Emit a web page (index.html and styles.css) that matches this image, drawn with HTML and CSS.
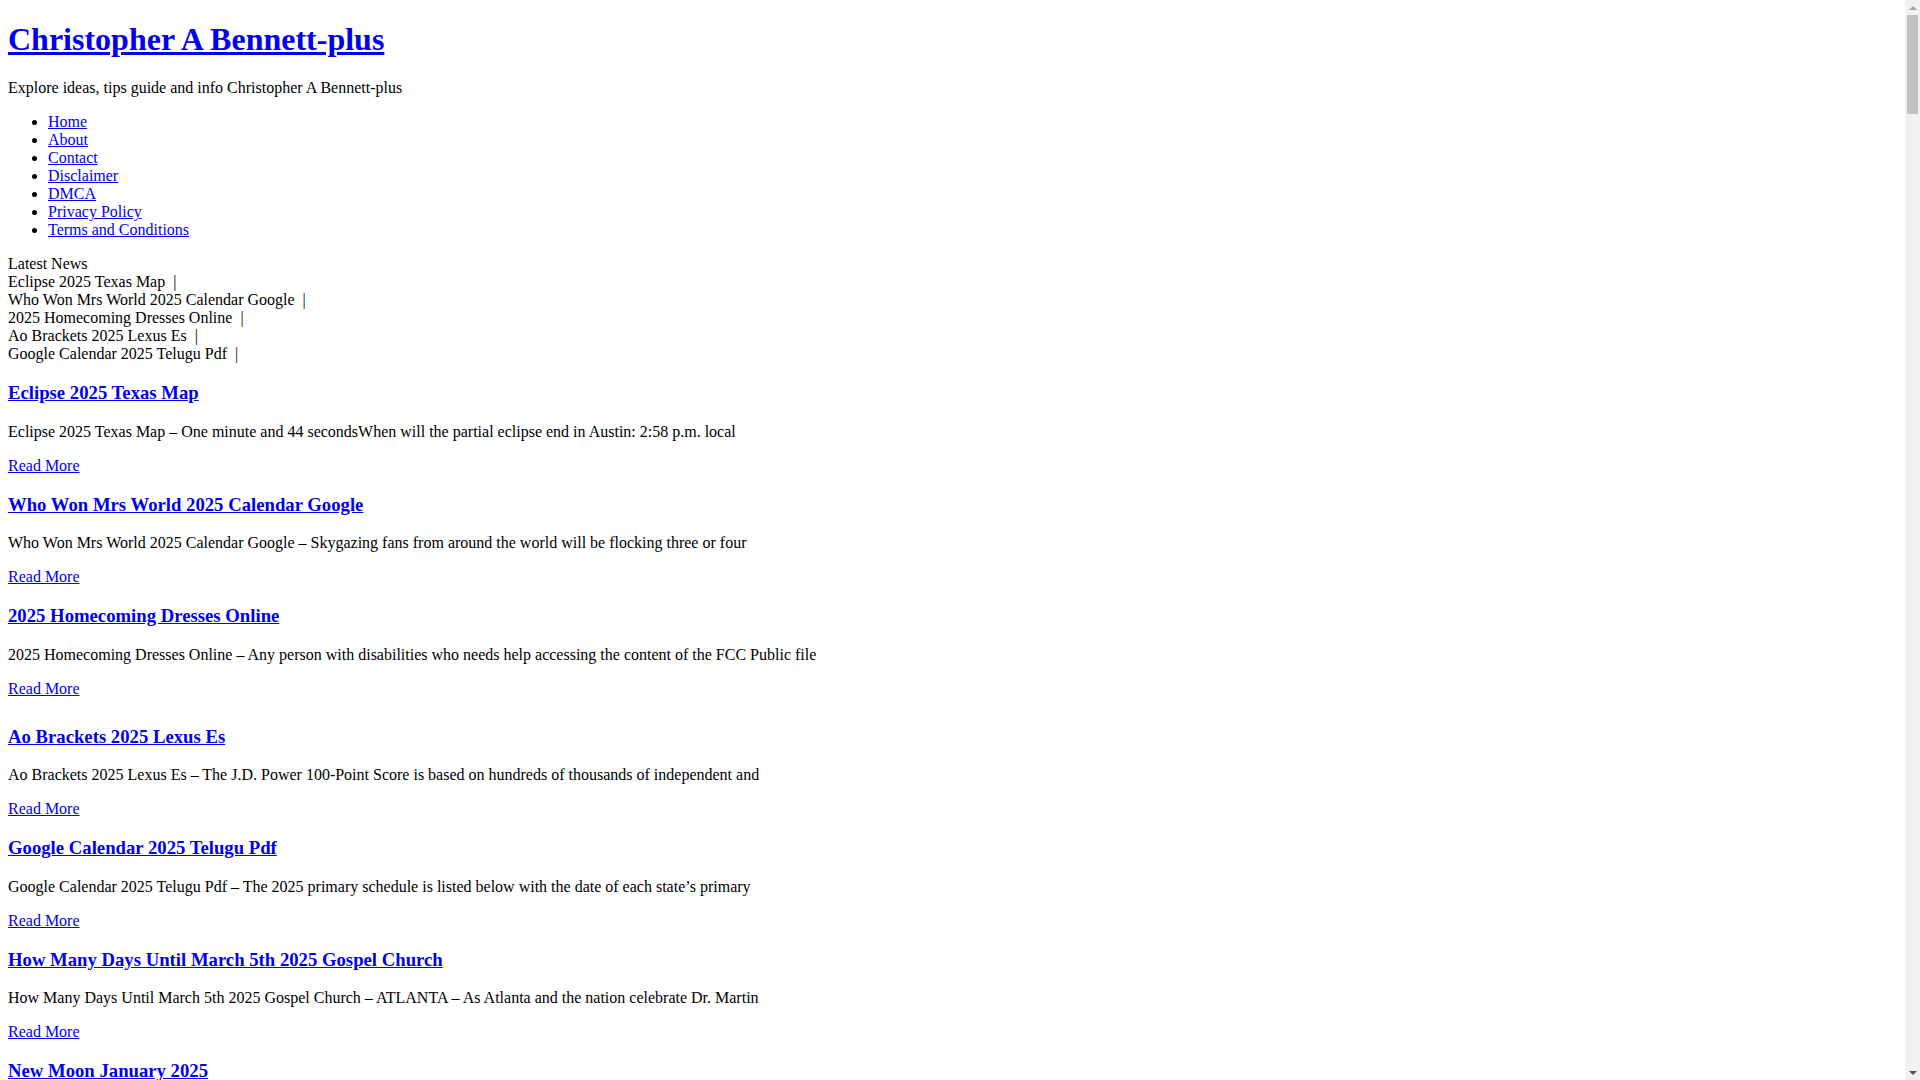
FILE: index.html
```html
<!DOCTYPE html>
<html lang="en">
<head>
  <meta charset="UTF-8" />
  <meta name="viewport" content="width=device-width, initial-scale=1.0" />
  <title>Christopher A Bennett-plus</title>
  <link rel="stylesheet" href="styles.css">
</head>
<body>
  <header class="site-header">
    <h1 class="site-title"><a href="#">Christopher A Bennett-plus</a></h1>
    <p class="site-desc">Explore ideas, tips guide and info Christopher A Bennett-plus</p>
    <ul class="menu">
      <li><a href="#">Home</a></li>
      <li><a href="#">About</a></li>
      <li><a href="#">Contact</a></li>
      <li><a href="#">Disclaimer</a></li>
      <li><a href="#">DMCA</a></li>
      <li><a href="#">Privacy Policy</a></li>
      <li><a href="#">Terms and Conditions</a></li>
    </ul>
  </header>

  <div class="latest-news">
    <div class="news-label">Latest News</div>
    <span class="news-item">Eclipse 2025 Texas Map &nbsp;|</span>
    <span class="news-item">Who Won Mrs World 2025 Calendar Google &nbsp;|</span>
    <span class="news-item">2025 Homecoming Dresses Online &nbsp;|</span>
    <span class="news-item">Ao Brackets 2025 Lexus Es &nbsp;|</span>
    <span class="news-item">Google Calendar 2025 Telugu Pdf &nbsp;|</span>
  </div>

  <main class="posts">
    <article class="post">
      <h3 class="post-title"><a href="#">Eclipse 2025 Texas Map</a></h3>
      <p>Eclipse 2025 Texas Map – One minute and 44 secondsWhen will the partial eclipse end in Austin: 2:58 p.m. local</p>
      <p><a href="#">Read More</a></p>
    </article>

    <article class="post">
      <h3 class="post-title"><a href="#">Who Won Mrs World 2025 Calendar Google</a></h3>
      <p>Who Won Mrs World 2025 Calendar Google – Skygazing fans from around the world will be flocking three or four</p>
      <p><a href="#">Read More</a></p>
    </article>

    <article class="post">
      <h3 class="post-title"><a href="#">2025 Homecoming Dresses Online</a></h3>
      <p>2025 Homecoming Dresses Online – Any person with disabilities who needs help accessing the content of the FCC Public file</p>
      <p><a href="#">Read More</a></p>
    </article>

    <article class="post post-spaced">
      <h3 class="post-title"><a href="#">Ao Brackets 2025 Lexus Es</a></h3>
      <p>Ao Brackets 2025 Lexus Es – The J.D. Power 100-Point Score is based on hundreds of thousands of independent and</p>
      <p><a href="#">Read More</a></p>
    </article>

    <article class="post">
      <h3 class="post-title"><a href="#">Google Calendar 2025 Telugu Pdf</a></h3>
      <p>Google Calendar 2025 Telugu Pdf – The 2025 primary schedule is listed below with the date of each state’s primary</p>
      <p><a href="#">Read More</a></p>
    </article>

    <article class="post">
      <h3 class="post-title"><a href="#">How Many Days Until March 5th 2025 Gospel Church</a></h3>
      <p>How Many Days Until March 5th 2025 Gospel Church – ATLANTA – As Atlanta and the nation celebrate Dr. Martin</p>
      <p><a href="#">Read More</a></p>
    </article>

    <article class="post">
      <h3 class="post-title"><a href="#">New Moon January 2025</a></h3>
      <p>New Moon January 2025 – The new moon marks the start of a fresh lunar cycle, when the moon sits between</p>
      <p><a href="#">Read More</a></p>
    </article>
  </main>

  <!-- page scrollbar, drawn since the capture hides the native one -->
  <div class="scrollbar" aria-hidden="true">
    <div class="sb-btn"><span class="sb-up"></span></div>
    <div class="sb-track"><div class="sb-thumb"></div></div>
    <div class="sb-btn"><span class="sb-down"></span></div>
  </div>
</body>
</html>
```

FILE: styles.css
```css
body {
  margin: 8px;
  font-family: "Liberation Serif", "Times New Roman", serif;
  font-size: 16px;
  color: #000;
  background: #fff;
}

a {
  color: #0000ee;
}

.site-title {
  font-size: 2em;
  margin: 13px 0 0.67em;
}

.site-desc {
  margin: 16px 0;
}

.menu {
  margin: 16px 0;
  padding-left: 40px;
}

.news-item {
  display: block;
}

.post-title {
  font-size: 1.17em;
  margin: 1em 0;
}

.post-spaced .post-title {
  margin-top: 28px;
}

.post p {
  margin: 16px 0;
}

.scrollbar {
  position: fixed;
  top: 0;
  right: 0;
  width: 15px;
  height: 100vh;
  background: #f1f1f1;
  display: flex;
  flex-direction: column;
}

.sb-btn {
  height: 15px;
  display: flex;
  align-items: center;
  justify-content: center;
}

.sb-up,
.sb-down {
  width: 0;
  height: 0;
  border-left: 4px solid transparent;
  border-right: 4px solid transparent;
}

.sb-up {
  border-bottom: 4px solid #a3a3a3;
}

.sb-down {
  border-top: 4px solid #505050;
}

.sb-track {
  flex: 1;
  padding: 0 2px;
}

.sb-thumb {
  height: 99px;
  background: #c1c1c1;
}
```
